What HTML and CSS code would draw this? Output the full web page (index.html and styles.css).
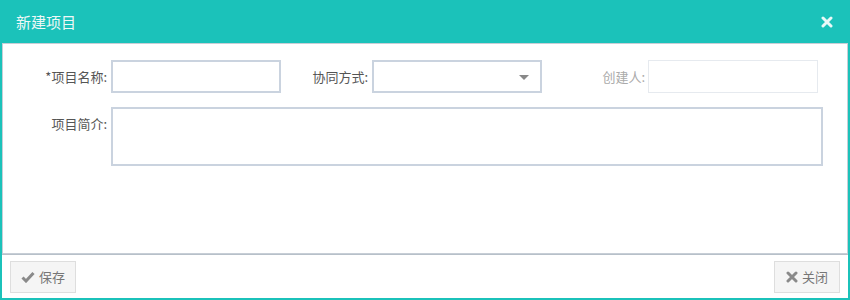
FILE: index.html
```html
<!DOCTYPE html>
<html lang="zh-CN">
<head>
    <meta charset="UTF-8">
    <title>新建项目</title>
    <link rel="stylesheet" href="styles.css">
</head>
<body>
    <div class="dialog">
        <div class="dialog-header">
            <span class="dialog-title">新建项目</span>
            <span class="dialog-close">
                <svg width="12" height="12" viewBox="0 0 12 12">
                    <path d="M2 2 L10 10 M10 2 L2 10" stroke="#eaf9f8" stroke-width="3" stroke-linecap="round"/>
                </svg>
            </span>
        </div>

        <div class="dialog-body">
            <div class="form-grid">
                <label class="form-label">*项目名称:</label>
                <input class="form-input" type="text">
                <label class="form-label">协同方式:</label>
                <div class="form-select">
                    <span class="caret"></span>
                </div>
                <label class="form-label disabled">创建人:</label>
                <input class="form-input readonly" type="text" disabled>

                <label class="form-label top">项目简介:</label>
                <textarea class="form-textarea"></textarea>
            </div>
        </div>

        <div class="dialog-footer">
            <button class="btn">
                <svg width="14" height="12" viewBox="0 0 14 12">
                    <path d="M1.5 6.5 L5 10 L12.5 2" fill="none" stroke="#8a8a8a" stroke-width="3"/>
                </svg>
                保存
            </button>
            <button class="btn">
                <svg width="12" height="12" viewBox="0 0 12 12">
                    <path d="M2 2 L10 10 M10 2 L2 10" stroke="#8a8a8a" stroke-width="3" stroke-linecap="round"/>
                </svg>
                关闭
            </button>
        </div>
    </div>
</body>
</html>
```

FILE: styles.css
```css
html, body {
    margin: 0;
    padding: 0;
}
body {
    font-family: "Microsoft YaHei", "Noto Sans CJK SC", "Liberation Sans", sans-serif;
    font-size: 13px;
    color: #555;
    background: #fff;
}
.dialog {
    width: 850px;
    height: 300px;
    box-sizing: border-box;
    border: 2px solid #1bc2ba;
    border-top: none;
    display: flex;
    flex-direction: column;
    background: #1bc2ba;
}
.dialog-header {
    height: 43px;
    display: flex;
    align-items: center;
    justify-content: space-between;
    padding: 0 15px 0 16px;
    margin: 0 -2px;
}
.dialog-title {
    color: #eef8f7;
    font-size: 15px;
}
.dialog-close {
    display: flex;
    margin-right: 2px;
}
.dialog-body {
    flex: 1;
    background: #fff;
    border: 1px solid #c7ced6;
    padding: 16px 0 0 0;
}
.form-grid {
    display: grid;
    grid-template-columns: 108px 170px 91px 170px 106px 170px;
    row-gap: 14px;
    align-items: center;
}
.form-label {
    text-align: right;
    padding-right: 4px;
    color: #555;
}
.form-label.disabled {
    color: #aaa;
    padding-right: 3px;
}
.form-label.top {
    align-self: start;
    padding-top: 7px;
}
.form-input,
.form-select,
.form-textarea {
    box-sizing: border-box;
    height: 33px;
    border: 2px solid #cad3df;
    background: #fff;
    margin: 0;
    font: inherit;
}
.form-input.readonly {
    border: 1px solid #e6eaef;
    height: 33px;
    margin-top: -1px;
}
.form-select {
    position: relative;
}
.caret {
    position: absolute;
    right: 11px;
    top: 13px;
    border-left: 5px solid transparent;
    border-right: 5px solid transparent;
    border-top: 5px solid #888;
}
.form-textarea {
    grid-column: 2 / 7;
    width: 712px;
    height: 59px;
    resize: none;
}
.dialog-footer {
    height: 43px;
    background: #fff;
    border-top: 1px solid #b7c0c9;
    display: flex;
    align-items: center;
    justify-content: space-between;
    padding: 0 8px 0 8px;
}
.btn {
    height: 32px;
    min-width: 66px;
    justify-content: center;
    padding: 0 10px;
    background: #f5f5f5;
    border: 1px solid #dedede;
    color: #777;
    font: inherit;
    font-size: 13px;
    display: flex;
    align-items: center;
    gap: 4px;
}
```
